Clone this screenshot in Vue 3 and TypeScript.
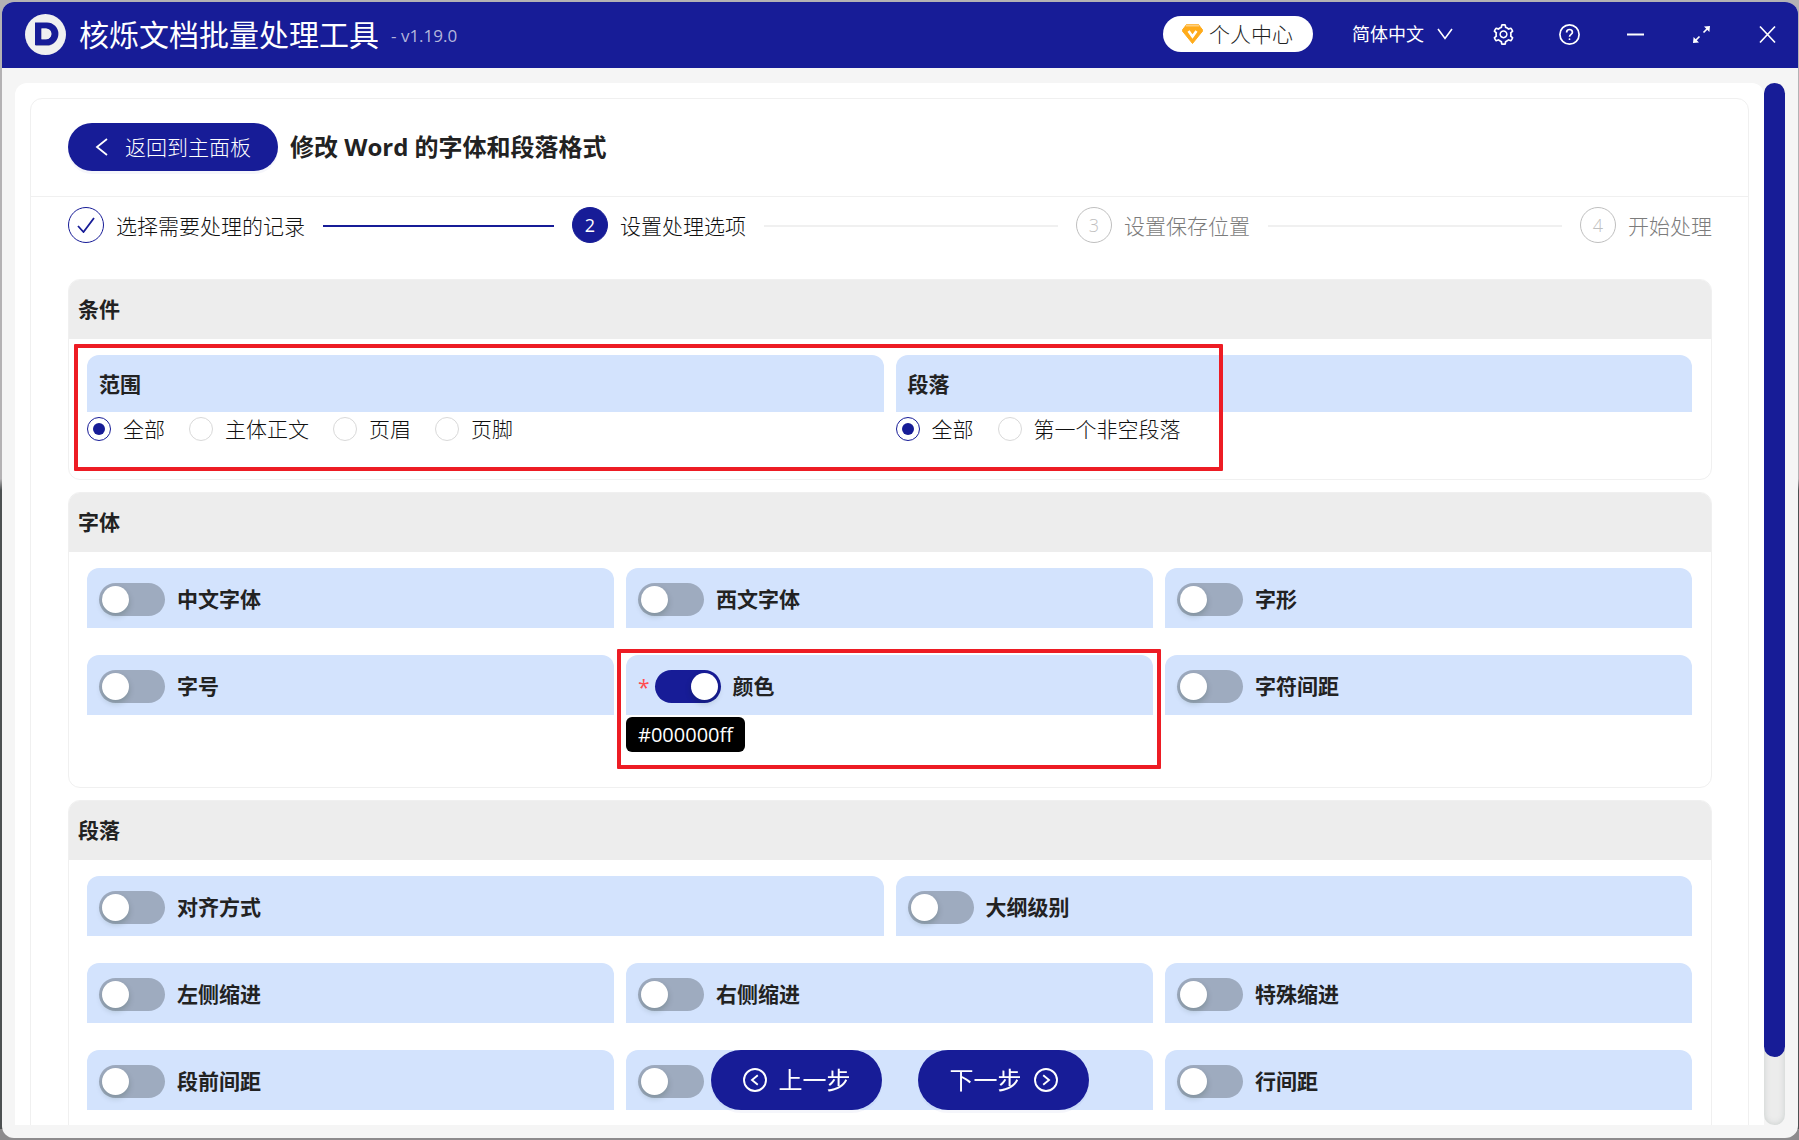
<script setup lang="ts">
import { reactive, ref } from 'vue'

interface Step {
  label: string
  state: 'done' | 'active' | 'wait'
}

interface ToggleField {
  id: string
  label: string
  color?: boolean
  compact?: boolean
}

interface RadioField {
  id: string
  label: string
  options: string[]
}

const steps: Step[] = [
  { label: '选择需要处理的记录', state: 'done' },
  { label: '设置处理选项', state: 'active' },
  { label: '设置保存位置', state: 'wait' },
  { label: '开始处理', state: 'wait' },
]

const conditions: RadioField[] = [
  { id: 'scope', label: '范围', options: ['全部', '主体正文', '页眉', '页脚'] },
  { id: 'paragraph', label: '段落', options: ['全部', '第一个非空段落'] },
]

const fontFields: ToggleField[] = [
  { id: 'cjk-font', label: '中文字体' },
  { id: 'latin-font', label: '西文字体' },
  { id: 'font-style', label: '字形' },
  { id: 'font-size', label: '字号' },
  { id: 'color', label: '颜色', color: true },
  { id: 'char-spacing', label: '字符间距' },
]

const alignFields: ToggleField[] = [
  { id: 'align', label: '对齐方式' },
  { id: 'outline', label: '大纲级别' },
]

const indentFields: ToggleField[] = [
  { id: 'indent-left', label: '左侧缩进' },
  { id: 'indent-right', label: '右侧缩进' },
  { id: 'indent-special', label: '特殊缩进' },
  { id: 'space-before', label: '段前间距' },
  { id: 'space-after', label: '段后间距', compact: true },
  { id: 'line-spacing', label: '行间距' },
]

const selected = reactive<Record<string, string>>({ scope: '全部', paragraph: '全部' })
const enabled = reactive<Record<string, boolean>>({ color: true })
const textColor = ref('#000000ff')
</script>

<template>
  <div class="window">
    <header class="titlebar">
      <svg class="logo" viewBox="0 0 41 41" aria-hidden="true">
        <circle cx="20.500" cy="20.500" r="20.500" fill="#f0f0f0" />
        <path d="M11 10.500h10.500a10.800 10.800 0 0 1 0 21.600H11z" fill="#b9b9c4" />
        <path
          fill-rule="evenodd"
          d="M10 8.500h12a11.300 11.300 0 0 1 0 22.800H10zM16.500 14.500v10.800h4.500a5.400 5.400 0 0 0 0-10.800z"
          fill="#171c97"
        />
        <path d="M16.500 14.500v10.800h4.500a5.400 5.400 0 0 0 0-10.800z" fill="#f0f0f0" />
      </svg>
      <h1 class="app-name">核烁文档批量处理工具</h1>
      <span class="version">- v1.19.0</span>

      <button class="account" type="button">
        <svg width="21" height="20" viewBox="0 0 21 20" aria-hidden="true">
          <path d="M5 0h11l5 6.500-10.500 13L0 6.500z" fill="#ffab1a" stroke="#ffab1a" stroke-linejoin="round" />
          <path d="M4 1.500h13" stroke="#ffcf7d" stroke-width="2" />
          <path d="M6.500 7l4 5.500 4-5.500" fill="none" stroke="#fff" stroke-width="2.600" />
        </svg>
        个人中心
      </button>
      <button class="language" type="button">
        简体中文
        <svg width="16" height="12" viewBox="0 0 16 12" aria-hidden="true">
          <path d="M1 1l7 9.500L15 1" fill="none" stroke="currentColor" stroke-width="1.600" />
        </svg>
      </button>
      <nav class="window-actions">
        <button type="button" aria-label="设置">
          <svg viewBox="64 64 896 896" width="21" height="21">
            <path
              fill="currentColor"
              d="M924.8 625.7l-65.5-56c3.1-19 4.7-38.4 4.7-57.8s-1.6-38.8-4.7-57.8l65.5-56a32.03 32.03 0 009.3-35.2l-.9-2.6a443.74 443.74 0 00-79.7-137.9l-1.8-2.1a32.12 32.12 0 00-35.1-9.5l-81.3 28.9c-30-24.600-63.500-44-99.700-57.600l-15.700-85a32.05 32.05 0 00-25.800-25.700l-2.700-.5c-52.100-9.400-106.900-9.400-159 0l-2.700.5a32.05 32.05 0 00-25.800 25.700l-15.800 85.400a351.86 351.86 0 00-99 57.400l-81.900-29.100a32 32 0 00-35.100 9.500l-1.800 2.100a446.02 446.02 0 00-79.700 137.900l-.9 2.600c-4.500 12.500-.8 26.500 9.300 35.200l66.300 56.600c-3.100 18.800-4.600 38-4.600 57.100 0 19.200 1.500 38.400 4.600 57.100L99 625.500a32.03 32.03 0 00-9.300 35.200l.9 2.600c18.100 50.400 44.900 96.900 79.700 137.900l1.800 2.100a32.12 32.12 0 0035.100 9.500l81.900-29.100c29.800 24.500 63.100 43.900 99 57.400l15.800 85.400a32.05 32.05 0 0025.800 25.700l2.700.5a449.400 449.400 0 00159 0l2.700-.5a32.05 32.05 0 0025.800-25.700l15.700-85a350 350 0 0099.700-57.600l81.300 28.900a32 32 0 0035.100-9.500l1.800-2.100c34.800-41.100 61.600-87.500 79.700-137.900l.9-2.600c4.500-12.300.8-26.300-9.300-35zM788.300 465.900c2.500 15.100 3.800 30.600 3.800 46.100s-1.300 31-3.800 46.100l-6.600 40.100 74.700 63.900a370.03 370.03 0 01-42.600 73.600L721 702.800l-31.400 25.800c-23.900 19.600-50.500 35-79.300 45.800l-38.100 14.300-17.900 97a377.500 377.500 0 01-85 0l-17.900-97.200-37.800-14.500c-28.500-10.800-55-26.200-78.700-45.700l-31.400-25.900-93.400 33.200c-17-22.900-31.200-47.600-42.600-73.600l75.500-64.500-6.500-40c-2.400-14.900-3.700-30.300-3.700-45.500 0-15.300 1.200-30.600 3.700-45.500l6.500-40-75.500-64.500c11.300-26.100 25.600-50.700 42.600-73.600l93.400 33.200 31.400-25.900c23.700-19.500 50.200-34.900 78.700-45.700l37.900-14.300 17.900-97.200c28.100-3.200 56.800-3.200 85 0l17.900 97 38.100 14.300c28.700 10.800 55.400 26.200 79.300 45.800l31.400 25.800 92.800-32.900c17 22.900 31.200 47.600 42.600 73.600L781.800 426l6.500 39.900zM512 326c-97.200 0-176 78.800-176 176s78.800 176 176 176 176-78.800 176-176-78.800-176-176-176zm79.200 255.200A111.600 111.600 0 01512 614c-29.900 0-58-11.700-79.200-32.800A111.600 111.600 0 01400 502c0-29.900 11.700-58 32.800-79.200C454 401.600 482.100 390 512 390c29.900 0 58 11.600 79.200 32.800A111.600 111.600 0 01624 502c0 29.900-11.700 58-32.800 79.200z"
            />
          </svg>
        </button>
        <button type="button" aria-label="帮助">
          <svg viewBox="0 0 21 21" width="21" height="21" fill="none" stroke="currentColor" stroke-width="1.700">
            <circle cx="10.500" cy="10.500" r="9.600" />
            <path d="M7.600 8.400c0-1.700 1.300-2.900 2.900-2.900s2.900 1.100 2.900 2.700c0 2.100-2.900 2.200-2.900 4.600" />
            <circle cx="10.500" cy="15.200" r="0.900" fill="currentColor" stroke="none" />
          </svg>
        </button>
        <button type="button" aria-label="最小化">
          <svg viewBox="0 0 21 21" width="21" height="21">
            <path d="M2 10.500h17" stroke="currentColor" stroke-width="1.800" />
          </svg>
        </button>
        <button type="button" aria-label="最大化">
          <svg viewBox="0 0 21 21" width="21" height="21">
            <path d="M12.500 8.500l4-4M8.500 12.500l-4 4" stroke="currentColor" stroke-width="1.700" />
            <path d="M13 2.600l6-.6-.6 6zM8 18.400l-6 .6.600-6z" fill="currentColor" />
          </svg>
        </button>
        <button type="button" aria-label="关闭">
          <svg viewBox="0 0 21 21" width="21" height="21">
            <path d="M3 2.500l15 16M18 2.500l-15 16" stroke="currentColor" stroke-width="1.700" />
          </svg>
        </button>
      </nav>
    </header>

    <div class="workspace">
      <main class="content">
        <div class="card">
          <div class="card-head">
            <button class="pill back" type="button">
              <svg width="13" height="18" viewBox="0 0 13 18" aria-hidden="true">
                <path d="M12 1L2 9l10 8" fill="none" stroke="currentColor" stroke-width="1.800" />
              </svg>
              返回到主面板
            </button>
            <h2>修改 Word 的字体和段落格式</h2>
          </div>

          <div class="card-body">
            <ol class="steps">
              <li v-for="(step, i) in steps" :key="step.label" class="step" :class="step.state">
                <span class="step-icon">
                  <svg v-if="step.state === 'done'" width="18" height="16" viewBox="0 0 18 16" aria-hidden="true">
                    <path d="M1 9l5.500 6L17 1" fill="none" stroke="currentColor" stroke-width="1.800" />
                  </svg>
                  <template v-else>{{ i + 1 }}</template>
                </span>
                <span class="step-label">{{ step.label }}</span>
                <span v-if="i < steps.length - 1" class="step-line"></span>
              </li>
            </ol>

            <section class="panel">
              <h3>条件</h3>
              <div class="panel-body">
                <div class="grid two">
                  <div v-for="field in conditions" :key="field.id" role="radiogroup" :aria-labelledby="field.id">
                    <div :id="field.id" class="field-head short">
                      <span class="field-label">{{ field.label }}</span>
                    </div>
                    <div class="radios">
                      <label v-for="option in field.options" :key="option" class="radio">
                        <input v-model="selected[field.id]" type="radio" :name="field.id + '-choice'" :value="option" />
                        {{ option }}
                      </label>
                    </div>
                  </div>
                </div>
              </div>
              <div class="mark mark-conditions"></div>
            </section>

            <section class="panel">
              <h3>字体</h3>
              <div class="panel-body">
                <div class="grid three">
                  <div v-for="field in fontFields" :key="field.id" class="field">
                    <label class="field-head">
                      <span v-if="field.color" class="required">*</span>
                      <input v-model="enabled[field.id]" class="switch" type="checkbox" />
                      <span class="field-label">{{ field.label }}</span>
                    </label>
                    <button v-if="field.color" class="color-value" type="button">{{ textColor }}</button>
                    <div v-if="field.color" class="mark mark-color"></div>
                  </div>
                </div>
              </div>
            </section>

            <section class="panel">
              <h3>段落</h3>
              <div class="panel-body">
                <div class="grid two">
                  <label v-for="field in alignFields" :key="field.id" class="field-head">
                    <input v-model="enabled[field.id]" class="switch" type="checkbox" />
                    <span class="field-label">{{ field.label }}</span>
                  </label>
                </div>
                <div class="grid three">
                  <label v-for="field in indentFields" :key="field.id" class="field-head">
                    <input v-model="enabled[field.id]" class="switch" type="checkbox" :aria-label="field.label" />
                    <span v-if="!field.compact" class="field-label">{{ field.label }}</span>
                  </label>
                </div>
              </div>
            </section>
          </div>
        </div>
      </main>
      <div class="scrollbar"><div class="thumb"></div></div>
    </div>

    <footer class="pager">
      <button class="pill" type="button">
        <svg width="24" height="24" viewBox="0 0 24 24" fill="none" stroke="currentColor" stroke-width="1.900" aria-hidden="true">
          <circle cx="12" cy="12" r="11" />
          <path d="M14.800 7.200L9 12l5.800 4.800" />
        </svg>
        上一步
      </button>
      <button class="pill" type="button">
        下一步
        <svg width="24" height="24" viewBox="0 0 24 24" fill="none" stroke="currentColor" stroke-width="1.900" aria-hidden="true">
          <circle cx="12" cy="12" r="11" />
          <path d="M9.200 7.200L15 12l-5.800 4.800" />
        </svg>
      </button>
    </footer>
  </div>
</template>

<style>
body {
  margin: 0;
  background: linear-gradient(#b4b2b4 0 42%, #4d5152 43% 99%, #8d8b8d 99%);
}
</style>

<style scoped>
.window {
  --brand: #171c97;
  box-sizing: border-box;
  height: 100vh;
  border: 2px solid transparent;
  border-right-width: 1px;
  background-clip: padding-box;
  background-color: #f5f5f5;
  border-radius: 14px;
  overflow: hidden;
  position: relative;
  display: flex;
  flex-direction: column;
  font-family: 'Open Sans', 'Noto Sans CJK SC', sans-serif;
  font-size: 21px;
  line-height: 30px;
  color: #222;
}

button {
  font: inherit;
  color: inherit;
  border: 0;
  padding: 0;
  background: none;
  cursor: pointer;
}

svg {
  display: block;
  flex: none;
}

h1,
h2,
h3 {
  margin: 0;
}

.titlebar {
  flex: none;
  box-sizing: border-box;
  height: 66px;
  display: flex;
  align-items: center;
  padding: 0 20px 2px 23px;
  background: var(--brand);
  color: #fff;
}

.logo {
  width: 41px;
  height: 41px;
}

.app-name {
  margin-left: 13px;
  padding-top: 2px;
  font-size: 30px;
  line-height: 42px;
  font-weight: 400;
}

.version {
  margin: 4px auto 0 12px;
  font-size: 17px;
  color: #b3b5dc;
}

.account {
  height: 36px;
  padding: 0 20px 0 19px;
  display: flex;
  align-items: center;
  gap: 6px;
  border-radius: 18px;
  background: #fff;
  color: #222;
  font-weight: 300;
}

.language {
  margin-left: 39px;
  display: flex;
  align-items: center;
  gap: 13px;
  font-size: 18px;
}

.window-actions {
  margin-left: 40px;
  display: flex;
  gap: 45px;
}

.workspace {
  flex: 1;
  min-height: 0;
  display: flex;
  padding: 15px 13px 13px;
}

.content {
  flex: 1;
  min-width: 0;
  padding: 15px;
  background: #fff;
  border-radius: 12px 12px 0 0;
  overflow-y: auto;
  scrollbar-width: none;
}

.scrollbar {
  flex: none;
  width: 21px;
  border-radius: 11px;
  background: #ececec;
  box-shadow: inset 0 0 6px #c8cecc;
}

.thumb {
  height: 93.5%;
  border-radius: 11px;
  background: var(--brand);
}

.card {
  border: 1px solid #f0f0f0;
  border-radius: 12px;
}

.card-head {
  display: flex;
  align-items: center;
  gap: 12px;
  padding: 24px 36px 25px 37px;
  border-bottom: 1px solid #f0f0f0;
}

.card-head h2 {
  font-size: 24px;
  line-height: 36px;
  font-weight: 700;
}

.pill {
  height: 60px;
  width: 171px;
  display: flex;
  align-items: center;
  justify-content: center;
  gap: 12px;
  border-radius: 30px;
  background: var(--brand);
  color: #fff;
  font-size: 24px;
  box-shadow: 0 3px 0 rgba(5, 25, 145, 0.04);
}

.back {
  width: 210px;
  height: 48px;
  gap: 17px;
  font-size: 21px;
  font-weight: 300;
}

.card-body {
  padding: 10px 36px 36px 37px;
}

.steps {
  display: flex;
  margin: 0 0 36px;
  padding: 0;
  list-style: none;
  font-weight: 300;
}

.step {
  flex: 1;
  display: flex;
  align-items: center;
}

.step:last-child {
  flex: none;
}

.step-icon {
  box-sizing: border-box;
  width: 36px;
  height: 36px;
  margin-right: 12px;
  display: flex;
  align-items: center;
  justify-content: center;
  border: 1px solid #bfbfbf;
  border-radius: 50%;
  font-size: 18px;
  color: #bfbfbf;
}

.step-label {
  padding-top: 2px;
  color: #7c7c7c;
}

.done .step-icon {
  border-color: var(--brand);
  color: var(--brand);
}

.active .step-icon {
  border-color: var(--brand);
  background: var(--brand);
  color: #fff;
  font-weight: 400;
}

.done .step-label,
.active .step-label {
  color: #111;
}

.step-line {
  flex: 1;
  height: 2px;
  margin: 1px 18px 0;
  background: #f0f0f0;
}

.done .step-line {
  background: var(--brand);
}

.panel {
  position: relative;
  margin-bottom: 12px;
  border: 1px solid #f0f0f0;
  border-radius: 12px;
}

.panel h3 {
  box-sizing: border-box;
  height: 59px;
  display: flex;
  align-items: center;
  padding: 0 9px 2px;
  border-radius: 11px 11px 0 0;
  background: #ededed;
  font-size: 21px;
  font-weight: 700;
}

.panel-body {
  padding: 16px 19px 33px 18px;
  display: flex;
  flex-direction: column;
  gap: 27px;
}

.grid {
  display: grid;
  gap: 27px 12px;
}

.two {
  grid-template-columns: 1fr 1fr;
}

.three {
  grid-template-columns: 1fr 1fr 1fr;
}

.field {
  position: relative;
}

.field-head {
  box-sizing: border-box;
  height: 60px;
  padding: 3px 12px 0;
  display: flex;
  align-items: center;
  border-radius: 12px 12px 0 0;
  background: #d3e3fd;
  font-weight: 700;
}

.field-head.short {
  height: 57px;
}

.field-label {
  padding-bottom: 2px;
}

.required {
  margin-right: 5px;
  font-weight: 400;
  color: #ff4d4f;
}

.switch {
  appearance: none;
  flex: none;
  width: 66px;
  height: 33px;
  margin: 0 12px 0 0;
  padding: 3px;
  box-sizing: border-box;
  display: flex;
  border-radius: 17px;
  background: #9eabbf;
}

.switch::before {
  content: '';
  width: 27px;
  height: 27px;
  border-radius: 50%;
  background: #fff;
  box-shadow: 0 3px 6px rgba(0, 35, 11, 0.2);
}

.switch:checked {
  justify-content: flex-end;
  background: var(--brand);
}

.radios {
  display: flex;
  gap: 24px;
  padding: 2px 0;
}

.radio {
  display: flex;
  align-items: center;
  gap: 12px;
  font-weight: 300;
  color: #111;
}

.radio input {
  appearance: none;
  width: 24px;
  height: 24px;
  margin: 0;
  box-sizing: border-box;
  border: 1px solid #d9d9d9;
  border-radius: 50%;
  display: flex;
  align-items: center;
  justify-content: center;
}

.radio input:checked {
  border-color: var(--brand);
}

.radio input:checked::before {
  content: '';
  width: 12px;
  height: 12px;
  border-radius: 50%;
  background: var(--brand);
}

.color-value {
  display: block;
  margin: 2px 0;
  height: 35px;
  width: 119px;
  border-radius: 6px;
  background: #000;
  color: #fff;
  font-size: 20px;
}

.mark {
  position: absolute;
  box-sizing: border-box;
  border: 4px solid #ed1c24;
  border-radius: 1px;
  pointer-events: none;
}

.mark-conditions {
  left: 5px;
  top: 64px;
  width: 70%;
  height: 127px;
}

.mark-color {
  left: -9px;
  right: -8px;
  top: -6px;
  height: 120px;
}

.pager {
  position: absolute;
  left: 0;
  right: 0;
  bottom: 28px;
  display: flex;
  justify-content: center;
  gap: 36px;
}
</style>
